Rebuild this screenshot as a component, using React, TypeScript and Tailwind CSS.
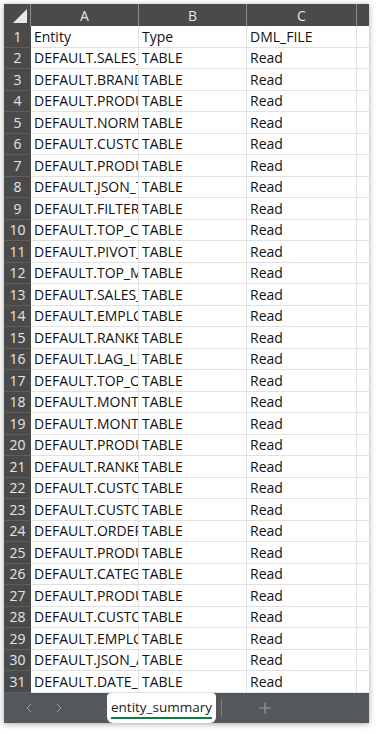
import { ChevronLeft, ChevronRight, Plus } from "lucide-react";

const entities = [
  "DEFAULT.SALES_SUMMARY",
  "DEFAULT.BRAND_SALES",
  "DEFAULT.PRODUCT_STATS",
  "DEFAULT.NORMALIZED_SALES",
  "DEFAULT.CUSTOMER_ORDERS",
  "DEFAULT.PRODUCT_RANK",
  "DEFAULT.JSON_TABLE",
  "DEFAULT.FILTERED_ORDERS",
  "DEFAULT.TOP_CUSTOMERS",
  "DEFAULT.PIVOT_SALES",
  "DEFAULT.TOP_MONTHS",
  "DEFAULT.SALES_TREND",
  "DEFAULT.EMPLOYEE_STATS",
  "DEFAULT.RANKED_PRODUCTS",
  "DEFAULT.LAG_LEAD_SALES",
  "DEFAULT.TOP_ORDERS",
  "DEFAULT.MONTHLY_SALES",
  "DEFAULT.MONTHLY_REVENUE",
  "DEFAULT.PRODUCT_SALES",
  "DEFAULT.RANKED_CUSTOMERS",
  "DEFAULT.CUSTOMER_SEGMENTS",
  "DEFAULT.CUSTOMER_LTV",
  "DEFAULT.ORDER_ITEMS",
  "DEFAULT.PRODUCT_MIX",
  "DEFAULT.CATEGORY_SALES",
  "DEFAULT.PRODUCT_MARGIN",
  "DEFAULT.CUSTOMER_CHURN",
  "DEFAULT.EMPLOYEE_SALES",
  "DEFAULT.JSON_ARRAY",
  "DEFAULT.DATE_INFO",
];

const rows = [
  ["Entity", "Type", "DML_FILE"],
  ...entities.map((e) => [e, "TABLE", "Read"]),
];

const font = { fontFamily: '"Open Sans", "Noto Sans", sans-serif' };

export default function App() {
  return (
    <div className="h-[734px] w-[379px] bg-white p-[4px] pr-[10px]" style={font}>
      <div className="flex h-[719px] w-[365px] flex-col overflow-hidden shadow-[0_1px_6px_rgba(0,0,0,0.35)]">
        {/* Column header */}
        <div className="flex h-[22px] shrink-0 bg-[#4a4a4a] text-[14px] text-[#e6e6e6]">
          <div className="relative w-[27px] border-r border-[#8a8a8a]">
            <div className="absolute bottom-[3px] right-[3px] h-0 w-0 border-b-[14px] border-l-[14px] border-b-[#e8e8e8] border-l-transparent" />
          </div>
          <div className="flex w-[108px] items-center justify-center border-r border-[#8a8a8a]">A</div>
          <div className="flex w-[108px] items-center justify-center border-r border-[#8a8a8a]">B</div>
          <div className="flex w-[110px] items-center justify-center border-r border-[#8a8a8a]">C</div>
          <div className="flex-1" />
        </div>

        {/* Rows */}
        <div className="flex-1 overflow-hidden">
          {rows.map((r, i) => (
            <div key={i} className="flex h-[21.5px] text-[14px] text-[#111]">
              <div className="flex w-[27px] shrink-0 items-center justify-center border-b border-[#5e5e5e] bg-[#4a4a4a] text-[14px] text-[#e6e6e6]">
                {i + 1}
              </div>
              <div className="flex w-[108px] shrink-0 items-center overflow-hidden whitespace-nowrap border-b border-r border-[#e1e1e1] pl-[3px]">
                {r[0]}
              </div>
              <div className="flex w-[108px] shrink-0 items-center overflow-hidden whitespace-nowrap border-b border-r border-[#e1e1e1] pl-[3px]">
                {r[1]}
              </div>
              <div className="flex w-[110px] shrink-0 items-center overflow-hidden whitespace-nowrap border-b border-r border-[#e1e1e1] pl-[3px]">
                {r[2]}
              </div>
              <div className="flex-1 border-b border-[#e1e1e1]" />
            </div>
          ))}
        </div>

        {/* Sheet tabs */}
        <div className="flex h-[30px] shrink-0 items-center bg-[#52585b] text-[#9aa0a3]">
          <div className="flex w-[103px] items-center gap-[14px] pl-[17px]">
            <ChevronLeft size={16} strokeWidth={1.5} />
            <ChevronRight size={16} strokeWidth={1.5} />
          </div>
          <div className="flex h-full w-[109px] flex-col items-center justify-center rounded-[6px] rounded-t-[4px] bg-white">
            <span className="border-b-2 border-[#107c41] text-[13.5px] font-medium leading-[19px] text-[#222]">
              entity_summary
            </span>
          </div>
          <div className="ml-[5px] h-[18px] w-px bg-[#7a8083]" />
          <div className="flex w-[86px] items-center justify-center">
            <Plus size={18} strokeWidth={1.5} />
          </div>
        </div>
      </div>
    </div>
  );
}
